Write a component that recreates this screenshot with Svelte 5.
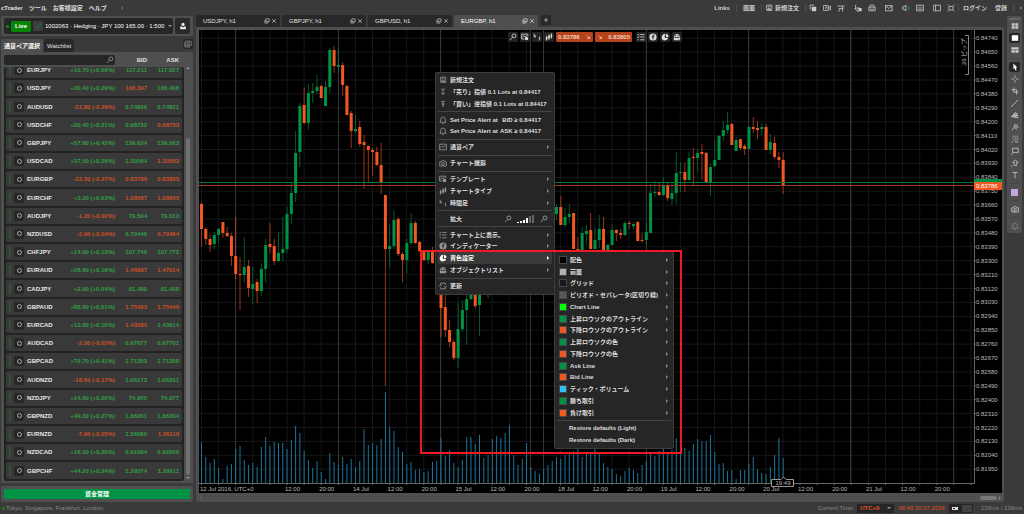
<script lang="ts">
  type Candle = [number, 'u' | 'd', number, number, number, number];

  const icons: Record<string, { d?: string; f?: string }> = {
    order: { d: 'M2 1.5H8.5V6M2 1.5V6.5M3.5 3.5H7M3.5 5.5H7', f: 'M1 6.5H9V8.5H2.5Z' },
    copy: { d: 'M1.5 7V1.5H6.5', f: 'M3.5 3.5H9V9H3.5Z' },
    video: { d: 'M.5 2H6.5V8H.5ZM6.5 5L9.5 2.5V7.5ZM2.5 4.2Q3.5 3 4.5 4.2L3.5 5.4V6.6' },
    pi: { d: 'M.5 2.5H9.5M2 5.5H8M3.5 5.5V7Q3.5 9 1.5 9M7 2.5V9.5' },
    touch: { d: 'M2 1V6.5M.8 5L4 9H6M4 4V7M4 5H7', f: 'M5.5 5H9.5V9H5.5Z' },
    print: { d: 'M2.5 4V1.5H7.5V4M1 4H9V8.5H1ZM2.5 6.5H7.5' },
    mail: { d: 'M.5 2H9V8.5H.5ZM.5 2.5L4.8 5.5L9 2.5' },
    sound: { d: 'M.5 3.5H2.5L5 1.5V8.5L2.5 6.5H.5Z', f: 'M9.5 2.5V7.5L6.5 5Z' },
    keys: { d: 'M.5 1.5H9.5V8.5H.5ZM2 4H3.5M4.3 4H5.7M6.5 4H8M2 6.3H8' },
    side: { d: 'M.5 1.5H9.5V8.5H.5ZM3.2 1.5V8.5' },
    full: { d: 'M2.5 3H7.5V7.5H2.5ZM.5 .8L2 2M9.5 .8L8 2M.5 9.5L2 8M9.5 9.5L8 8' },
    search: { d: 'M6.2 1.2A2.4 2.4 0 1 1 6.2 6A2.4 2.4 0 1 1 6.2 1.2ZM4.3 5.5L1.2 8.8' },
    user: { f: 'M5 1A1.8 1.8 0 0 1 5 5A1.8 1.8 0 0 1 5 1ZM1.5 5.5H3.5L5 7L6.5 5.5H8.5V9H1.5Z' },
    check: { d: 'M1.5 5L4 7.5L8.5 2.5' },
    template: { d: 'M.8 1.5H8.5V4M.8 1.5V7.5H4.5M1.5 5.5L3.5 3.5L5 5L7 3', f: 'M7 4.8A2.2 2.2 0 1 1 7 9.2A2.2 2.2 0 1 1 7 4.8Z' },
    tf: { d: 'M1.5 1V5.5M1.5 3.5H3.2V5.5M7.2 5.8L8.2 5V9.2' },
    candles: { d: 'M2 3.5V9.5M5 1.5V8.5M8 .5V7', f: 'M1 5H3V8H1ZM4 3H6V7H4ZM7 2H9V5.5H7Z' },
    list: { d: 'M.5 2L1.3 3L2.8 1M.5 5L1.3 6L2.8 4M.8 8.5H2.5M4 2H9.5M4 5H9.5M4 8.5H9.5' },
    indicator: { f: 'M5 .5A4.5 4.5 0 1 0 5 9.5A4.5 4.5 0 1 0 5 .5ZM6.8 2V3H5.6V4.2H6.6V5.2H5.6V8.2H4.4V5.2H3.5V4.2H4.4V3Q4.4 2 5.6 2Z' },
    palette: { f: 'M.8 6Q1 2 4.5 1L5.5 2.5Q3.8 4.2 5 5.8H8.6V7.5Q7 9.5 3.5 9.3Q1 9 .8 6ZM6 .8A3.4 3.4 0 0 1 9.2 5H6.4Z' },
    objects: { d: 'M1.5 6Q1.5 1.5 5 1.5Q8 1.5 8 5', f: 'M5 2L7.5 5H2.5ZM1 6H5L9 9H1ZM6 5.5H9V8H7Z' },
    bell: { d: 'M1 7.8H9L7.8 6.3V4Q7.6 1.5 5 1.2Q2.4 1.5 2.2 4V6.3ZM4 9.3H6' },
    sell: { d: 'M2.5 1.5H7.5M5 2V8M3 6L5 8.3L7 6' },
    buy: { d: 'M2.5 2H7.5M5 3V9', f: 'M3 4.5H7L5 7Z' },
    pair: { d: 'M.8 1.5H9.2V8.5H.8ZM2 6L4 4L5.5 5.5L8 3' },
    camera: { d: 'M1 3.5H3L4 2H6.5L7.5 3.5H9.2V8.8H1ZM5.1 4.4A1.7 1.7 0 1 1 5.1 7.8A1.7 1.7 0 1 1 5.1 4.4' },
    refresh: { d: 'M2 3V1.5H8V3.5M8 7V8.5H2V6.5M.5 5L2 3L3.5 5M6.5 5L8 7L9.5 5' },
    window: { d: 'M3 1.5H8.5V6H3ZM1.5 3.5V8.5H6.5V7' },
    close: { d: 'M2 2L8 8M8 2L2 8' },
    plus: { d: 'M5 1.5V8.5M1.5 5H8.5' },
    grid: { f: 'M1 1.5H4.6V4.6H1ZM5.4 1.5H9V4.6H5.4ZM1 5.4H4.6V8.5H1ZM5.4 5.4H9V8.5H5.4Z' },
    single: { f: 'M1 1.5H9V8.5H1Z' },
    split: { f: 'M.5 1.5H9.5V4.3H.5ZM.5 5.2H4.6V8.5H.5ZM5.4 5.2H9.5V8.5H5.4Z' },
    pointer: { f: 'M3 .5L8 5.5H6L7 9L5.6 9.5L4.5 6.5L3 7.5Z' },
    cross: { d: 'M5 .5V3.8M5 6.2V9.5M.5 5H3.8M6.2 5H9.5' },
    crop: { d: 'M3.5 .5V6.5H9.5M.5 3.5H7V9.5' },
    line: { d: 'M1.5 8.5L9 1', f: 'M.5 8H2V9.5H.5Z' },
    fan: { d: 'M1 7L6 1M1 7L8 3M1 7L9 5.5M1 7L9 8.5M4 2.5L6 8M6 2L8.5 8' },
    fork: { d: 'M1 9L5 5L8 2M3 4L7 8M5 1.5L9 5.5M3.5 4.5L5.5 1.5M6 7L9 4.5' },
    fib: { d: 'M2 1.5H3.5M4.5 1.5H6M7 1.5H9M2 4H3.5M4.5 4H6M7 4H9M3 6.5H4.5M5.5 6.5H7M8 6.5H9M5 8.8H9', f: 'M.5 8H2V9.5H.5Z' },
    shape: { d: 'M2 1.5H9V7H2Z', f: 'M.5 8H2V9.5H.5Z' },
    arrow: { d: 'M5.5 1L9 4.5H7V8H4V4.5H2Z', f: 'M.5 8H2V9.5H.5Z' },
    text: { d: 'M1.8 1.8H8.2M5 1.8V9' },
    sheet: { d: 'M2 1.5H9V7H2ZM3.5 3.5H7.5M3.5 5.2H7.5M1 3V8.8H7.5' },
    trend: { d: 'M2.5 2.5L6.5 6.5', f: 'M8 3.5V8H3.5Z' },
  };

  const topGroups = [['copy', 'video', 'pi'], ['touch', 'print'], ['mail'], ['sound', 'keys'], ['side', 'full']];

  const quotes = [
    ['EURJPY', '+10.70 (+0.09%)', '117.011', '117.027', 'uu'],
    ['USDJPY', '+30.40 (+0.29%)', '106.397', '106.408', 'du'],
    ['AUDUSD', '-21.80 (-0.29%)', '0.74806', '0.74821', 'uu'],
    ['USDCHF', '+20.40 (+0.21%)', '0.98732', '0.98753', 'ud'],
    ['GBPJPY', '+57.80 (+0.42%)', '139.634', '139.663', 'uu'],
    ['USDCAD', '+37.50 (+0.29%)', '1.30564', '1.30582', 'ud'],
    ['EURGBP', '-22.30 (-0.27%)', '0.83786', '0.83805', 'dd'],
    ['EURCHF', '+3.20 (+0.03%)', '1.08587', '1.08605', 'dd'],
    ['AUDJPY', '-1.20 (-0.02%)', '79.594', '79.613', 'uu'],
    ['NZDUSD', '-2.90 (-0.04%)', '0.70446', '0.70464', 'ud'],
    ['CHFJPY', '+14.00 (+0.13%)', '107.746', '107.772', 'uu'],
    ['EURAUD', '+28.60 (+0.19%)', '1.46987', '1.47014', 'dd'],
    ['CADJPY', '+2.90 (+0.04%)', '81.480', '81.498', 'uu'],
    ['GBPAUD', '+88.60 (+0.51%)', '1.75403', '1.75446', 'dd'],
    ['EURCAD', '+13.80 (+0.10%)', '1.43585', '1.43614', 'du'],
    ['AUDCAD', '-2.00 (-0.02%)', '0.97677', '0.97701', 'uu'],
    ['GBPCAD', '+70.70 (+0.41%)', '1.71353', '1.71388', 'uu'],
    ['AUDNZD', '-18.60 (-0.17%)', '1.06173', '1.06201', 'uu'],
    ['NZDJPY', '+14.60 (+0.20%)', '74.955', '74.977', 'uu'],
    ['GBPNZD', '+49.30 (+0.27%)', '1.86261', '1.86304', 'uu'],
    ['EURNZD', '-7.90 (-0.05%)', '1.56080', '1.56110', 'ud'],
    ['NZDCAD', '+18.30 (+0.20%)', '0.91984', '0.92006', 'uu'],
    ['GBPCHF', '+44.20 (+0.34%)', '1.29574', '1.29611', 'uu'],
  ];

  const chartTabs = ['USDJPY, h1', 'GBPJPY, h1', 'GBPUSD, h1', 'EURGBP, h1'];

  // slot, direction, high, body top, body bottom, low
  const candles: Candle[] = [
    [0, 'd', 172, 174, 199, 217], [1, 'd', 197, 199, 209, 215], [2, 'd', 205, 209, 215, 222], [3, 'u', 202, 205, 214, 219],
    [4, 'u', 198, 199, 205, 213], [5, 'd', 192, 192, 203, 208], [6, 'd', 197, 203, 206, 207], [7, 'd', 203, 206, 226, 236],
    [8, 'd', 187, 226, 244, 249], [9, 'd', 227, 244, 245, 280], [10, 'u', 207, 237, 245, 253], [11, 'd', 230, 236, 258, 267],
    [12, 'u', 237, 254, 259, 274], [13, 'd', 249, 252, 261, 273], [14, 'u', 233, 239, 261, 266], [15, 'u', 209, 215, 239, 253],
    [16, 'd', 193, 214, 217, 223], [17, 'd', 209, 216, 231, 235], [18, 'u', 202, 223, 231, 232], [19, 'u', 187, 219, 223, 231],
    [20, 'u', 177, 184, 219, 223], [21, 'u', 153, 163, 184, 194], [22, 'u', 101, 123, 163, 172], [23, 'u', 73, 76, 122, 137],
    [24, 'd', 58, 75, 93, 94], [25, 'u', 54, 63, 93, 100], [26, 'u', 53, 61, 63, 73], [27, 'u', 45, 57, 61, 64],
    [28, 'd', 55, 56, 68, 68], [29, 'u', 51, 57, 76, 76], [30, 'u', 18, 20, 57, 63], [31, 'd', 16, 20, 36, 43],
    [32, 'u', 19, 35, 37, 43], [33, 'd', 32, 35, 55, 66], [34, 'd', 55, 56, 85, 85], [35, 'd', 81, 83, 101, 118],
    [36, 'u', 85, 99, 101, 103], [37, 'd', 91, 97, 114, 117], [38, 'd', 105, 112, 115, 159], [39, 'd', 115, 116, 120, 152],
    [40, 'd', 118, 120, 122, 146], [41, 'd', 117, 122, 135, 136], [42, 'd', 113, 135, 153, 164], [43, 'd', 165, 165, 219, 356],
    [44, 'u', 194, 216, 219, 237], [45, 'u', 180, 190, 216, 219], [46, 'd', 187, 189, 224, 226], [47, 'd', 222, 224, 230, 252],
    [48, 'u', 209, 213, 230, 243], [49, 'u', 183, 193, 213, 215], [50, 'd', 191, 193, 213, 214], [51, 'd', 211, 212, 221, 222],
    [52, 'd', 221, 222, 230, 231], [53, 'u', 220, 222, 230, 234], [54, 'd', 217, 221, 233, 234], [56, 'd', 225, 230, 278, 307],
    [57, 'd', 260, 277, 300, 307], [58, 'd', 290, 300, 312, 317], [59, 'd', 310, 312, 328, 330], [60, 'u', 273, 299, 328, 338],
    [61, 'u', 270, 280, 299, 302], [62, 'u', 260, 269, 280, 315], [63, 'u', 255, 262, 269, 270], [64, 'd', 238, 240, 276, 278],
    [65, 'u', 240, 245, 275, 306], [67, 'd', 240, 242, 250, 268],
    [83, 'u', 174, 177, 184, 190], [84, 'd', 166, 177, 195, 195], [85, 'u', 178, 187, 195, 197], [86, 'u', 174, 184, 187, 193],
    [87, 'd', 183, 183, 219, 219], [88, 'd', 207, 219, 221, 221], [89, 'u', 197, 203, 221, 221], [90, 'u', 195, 201, 204, 215],
    [91, 'd', 183, 200, 219, 219], [92, 'u', 198, 210, 219, 219], [93, 'u', 185, 199, 210, 218], [94, 'd', 187, 199, 221, 221],
    [95, 'u', 214, 215, 220, 220], [96, 'u', 194, 200, 215, 215], [97, 'd', 199, 200, 203, 211], [98, 'd', 199, 203, 205, 209],
    [99, 'u', 191, 193, 205, 206], [100, 'd', 191, 193, 194, 199], [101, 'u', 192, 194, 196, 199], [102, 'd', 191, 192, 211, 211],
    [103, 'd', 203, 210, 211, 213], [104, 'u', 193, 202, 210, 215], [105, 'u', 154, 163, 203, 203], [106, 'u', 151, 162, 163, 167],
    [107, 'd', 152, 162, 165, 166], [108, 'u', 147, 156, 165, 166], [109, 'd', 153, 155, 168, 171], [110, 'u', 152, 163, 169, 175],
    [111, 'u', 122, 143, 163, 174], [112, 'u', 132, 142, 143, 162], [113, 'd', 133, 142, 150, 162], [114, 'u', 122, 128, 150, 151],
    [115, 'd', 118, 127, 128, 156], [116, 'u', 119, 123, 128, 142], [117, 'd', 114, 122, 124, 150], [118, 'd', 122, 123, 152, 152],
    [119, 'u', 134, 137, 152, 166], [120, 'u', 110, 130, 136, 137], [121, 'u', 105, 106, 130, 130], [122, 'u', 91, 100, 106, 111],
    [123, 'u', 82, 95, 100, 104], [124, 'd', 93, 94, 115, 115], [125, 'u', 107, 110, 121, 121], [126, 'd', 109, 109, 118, 120],
    [127, 'd', 114, 116, 119, 125], [128, 'u', 96, 97, 119, 119], [129, 'd', 87, 97, 99, 103], [130, 'd', 91, 98, 100, 109],
    [131, 'u', 93, 97, 99, 105], [132, 'd', 94, 97, 120, 120], [133, 'u', 104, 112, 120, 124], [134, 'd', 107, 113, 127, 129],
    [135, 'd', 122, 127, 130, 138], [136, 'd', 122, 130, 156, 164],
  ];

  const volumes = [
    41, 26, 20, 24, 15, 4, 17, 19, 34, 37, 23, 18, 20, 16, 36, 46, 37, 41, 40, 40, 34, 43, 57, 50, 32, 23, 15, 22, 11, 4,
    30, 21, 18, 26, 19, 24, 16, 22, 54, 38, 40, 38, 44, 91, 56, 52, 36, 31, 19, 21, 13, 14, 11, 12, 21, 22, 45, 27, 33, 20,
    16, 23, 46, 46, 39, 48, 25, 28, 44, 47, 45, 50, 58, 28, 18, 24, 40, 16, 12, 9, 14, 18, 22, 26, 24, 28, 30, 32, 34, 26,
    31, 30, 34, 29, 20, 16, 14, 9, 7, 12, 15, 13, 10, 18, 22, 30, 27, 32, 34, 30, 33, 45, 30, 35, 32, 39, 44, 42, 42, 48,
    31, 19, 20, 12, 13, 4, 13, 13, 19, 26, 14, 10, 9, 16, 28, 45, 25,
  ];

  const slotX = (i: number) => 2.5 + i * 4.277;
  const columns = Array.from({ length: 46 }, (_, i) => 2.5 + i * 17.1);
  const days = [36, 139, 241, 331, 344, 447, 549, 651, 754];
  const prices = Array.from({ length: 32 }, (_, i) => ({
    y: 8.3 + i * 13.9,
    label: (0.8474 - i * 0.0009).toFixed(5),
  }));
  const times = ['12:00', '20:00', '14 Jul', '12:00', '20:00', '15 Jul', '12:00', '20:00', '18 Jul', '12:00', '20:00',
    '19 Jul', '12:00', '20:00', '20 Jul', '12:00', '20:00', '21 Jul', '12:00', '20:00'];

  const menu = [
    [{ icon: 'order', label: '新規注文' }, { icon: 'sell', label: '「売り」指値 0.1 Lots at 0.84417' }, { icon: 'buy', label: '「買い」逆指値 0.1 Lots at 0.84417' }],
    [{ icon: 'bell', label: 'Set Price Alert at', value: 'BID ≥ 0.84417' }, { icon: 'bell', label: 'Set Price Alert at', value: 'ASK ≥ 0.84417' }],
    [{ icon: 'pair', label: '通貨ペア', sub: true }],
    [{ icon: 'camera', label: 'チャート撮影' }],
    [{ icon: 'template', label: 'テンプレート', sub: true }, { icon: 'candles', label: 'チャートタイプ', sub: true }, { icon: 'tf', label: '時間足', sub: true }],
    [{ icon: '', label: '拡大', zoom: true }],
    [{ icon: 'list', label: 'チャート上に表示。', sub: true }, { icon: 'indicator', label: 'インディケーター', sub: true }, { icon: 'palette', label: '背色設定', sub: true, active: true }, { icon: 'objects', label: 'オブジェクトリスト', sub: true }],
    [{ icon: 'refresh', label: '更新' }],
  ] as { icon: string; label: string; value?: string; sub?: boolean; zoom?: boolean; active?: boolean }[][];

  const colors = [
    ['#000000', '配色'], ['#b2b2b2', '前面'], ['#18181f', 'グリッド'], ['#595959', 'ピリオド・セパレータ(区切り線)'],
    ['#00ff00', 'Chart Line'], ['#009345', '上昇ロウソクのアウトライン'], ['#f15923', '下降ロウソクのアウトライン'],
    ['#009345', '上昇ロウソクの色'], ['#f15923', '下降ロウソクの色'], ['#009345', 'Ask Line'], ['#f15923', 'Bid Line'],
    ['#33bdf2', 'ティック・ボリューム'], ['#009345', '勝ち取引'], ['#f15923', '負け取引'],
  ];

  const rail = [
    ['grid', 'single', 'split'],
    ['pointer', 'cross', 'crop', 'line', 'fan', 'fork', 'fib', 'shape', 'arrow', 'text'],
    ['swatch'],
    ['camera'],
    ['bell'],
  ];

  let selectedTab = $state('EURGBP, h1');
</script>

{#snippet icon(name: string)}
  <svg class="icon" viewBox="0 0 10 10" aria-hidden="true">
    {#if icons[name]?.d}<path d={icons[name].d} fill="none" stroke="currentColor" />{/if}
    {#if icons[name]?.f}<path class="solid" d={icons[name].f} fill="currentColor" fill-rule="evenodd" />{/if}
  </svg>
{/snippet}

<div class="app">
  <header>
    <nav>
      <button>cTrader</button>
      <button>ツール</button>
      <button>お客様設定</button>
      <button>ヘルプ</button>
      <span class="chev left"></span>
    </nav>
    <div class="top-right">
      <button>Links</button>
      <i class="sep"></i>
      <button>画面</button>
      <i class="sep"></i>
      <button class="new-order">{@render icon('order')}新規注文</button>
      <i class="sep"></i>
      <div class="icon-groups">
        {#each topGroups as group}
          <div class="icon-group">
            {#each group as name}
              <button class={name} aria-label={name}>{@render icon(name)}</button>
            {/each}
          </div>
        {/each}
      </div>
      <div class="account-links">
        <i class="sep"></i>
        <button>ログイン</button>
        <button class="register">登録</button>
      </div>
      <i class="sep"></i>
      <span class="chev"></span>
    </div>
  </header>

  <main>
    <aside>
      <section class="account">
        <div class="account-box">
          <i class="dot"></i>
          <button class="live">Live</button>
          <span class="tick">{@render icon('check')}</span>
          <select aria-label="Account">
            <option>1002063 · Hedging · JPY 100 165.00 · 1:500</option>
          </select>
          <span class="chev down"></span>
        </div>
        <button class="profile" aria-label="Profile">{@render icon('user')}</button>
      </section>

      <div class="side-tabs">
        <button class="on">通貨ペア選択</button>
        <button>Watchlist</button>
        <button class="sheet" aria-label="Details">{@render icon('sheet')}</button>
      </div>

      <section class="pairs">
        <div class="filter">
          <label class="search"><input type="text" aria-label="Search" />{@render icon('search')}</label>
          <b>BID</b>
          <b>ASK</b>
        </div>
        <div class="scroller">
          <div class="list">
            <table aria-label="Quotes">
              <tbody>
                {#each quotes as [symbol, change, bid, ask, dir]}
                  <tr>
                    <td class="mark"><i></i></td>
                    <td class="opt"><button aria-label="Open {symbol}"><span></span></button></td>
                    <th scope="row">{symbol}</th>
                    <td class="change {change[0] === '+' ? 'u' : 'd'}">{change}</td>
                    <td class="price {dir[0]}">{bid}</td>
                    <td class="price {dir[1]}">{ask}</td>
                  </tr>
                {/each}
              </tbody>
            </table>
          </div>
          <div class="bar"><span class="chev up"></span><i></i><span class="chev down"></span></div>
        </div>
      </section>

      <section class="funds"><button>資金管理</button></section>
    </aside>

    <div class="center">
      <div class="chart-tabs">
        {#each chartTabs as tab}
          <div class="chart-tab" class:on={selectedTab === tab}>
            <button class="name" onclick={() => (selectedTab = tab)}>{tab}</button>
            <button aria-label="Detach">{@render icon('window')}</button>
            <button aria-label="Close">{@render icon('close')}</button>
          </div>
        {/each}
        <button class="add" aria-label="Add chart">{@render icon('plus')}</button>
      </div>

      <div class="frame">
        <div class="plot">
          <svg class="chart" viewBox="0 0 803 463">
            <rect width="803" height="463" fill="#000" />
            {#each prices as p}
              <line class="grid" x1="0" x2="775" y1={p.y} y2={p.y} />
            {/each}
            {#each columns as x}
              <line class="grid" x1={x} x2={x} y1="0" y2="453" />
              <line class="axis" x1={x} x2={x} y1="453" y2="455" />
            {/each}
            {#each days as x}
              <line class="day" x1={x + 0.5} x2={x + 0.5} y1="0" y2="453" />
            {/each}
            {#each volumes as v, i}
              <rect x={slotX(i) - 0.5} y={453 - v} width="1" height={v} fill="#1e7397" />
            {/each}
            {#each candles as [i, dir, high, top, bottom, low]}
              <g class={dir === 'u' ? 'bull' : 'bear'}>
                <rect x={slotX(i) - 0.5} y={high} width="1" height={low - high} opacity="0.6" />
                <rect x={slotX(i) - 1.5} y={top} width="3" height={Math.max(bottom - top, 1)} />
              </g>
            {/each}
            <line x1="0" x2="775" y1="152.5" y2="152.5" stroke="#007a38" />
            <line x1="0" x2="775" y1="155.5" y2="155.5" stroke="#9c3c1b" />

            <line class="axis" x1="0" x2="775" y1="453.5" y2="453.5" />
            <line class="axis" x1="775.5" x2="775.5" y1="0" y2="454" />
            {#each prices as p}
              <line class="axis" x1="775" x2="777" y1={p.y} y2={p.y} />
              <text x="777" y={p.y + 2}>{p.label}</text>
            {/each}
            <rect x="775" y="149" width="28" height="5" fill="#009345" />
            <rect x="775" y="152" width="28" height="8" fill="#f15923" />
            <text class="bid" x="777" y="158">0.83786</text>

            <text x="1" y="461">12 Jul 2016, UTC+0</text>
            {#each times as t, i}
              <text x={93.5 + i * 34.2} y="461" text-anchor="middle">{t}</text>
            {/each}
            <path d="M572.5 449.5H582L584.5 447L587 449.5H594.5V456.5H572.5Z" fill="#000" stroke="#999" />
            <text x="584" y="455" text-anchor="middle">19:49</text>

            <path d="M766 5.5H769.5V44.5H766" fill="none" stroke="#888" />
            <text x="767" y="35" transform="rotate(-90 767 35)">26 ピップ</text>
          </svg>

          <div class="chart-tools">
            <button aria-label="Zoom">{@render icon('search')}</button>
            <button aria-label="Template">{@render icon('template')}</button>
            <button aria-label="Timeframe">{@render icon('tf')}</button>
            <button aria-label="Chart type">{@render icon('candles')}</button>
            <button class="deal">0.83786{@render icon('trend')}</button>
            <button class="deal">{@render icon('trend')}0.83805</button>
            <button aria-label="View options">{@render icon('list')}</button>
            <button aria-label="Indicators">{@render icon('indicator')}</button>
            <button aria-label="Colors">{@render icon('palette')}</button>
            <button aria-label="Objects">{@render icon('objects')}</button>
          </div>

          <div class="menu context" role="menu">
            {#each menu as group, g}
              {#if g > 0}<hr />{/if}
              {#each group as item}
                <button role="menuitem" class:active={item.active}>
                  <span class="ico">{#if item.icon}{@render icon(item.icon)}{/if}</span>
                  <span class="label">{item.label}</span>
                  {#if item.value}<span class="value">{item.value}</span>{/if}
                  {#if item.zoom}
                    <span class="zoom">
                      {@render icon('search')}
                      <svg class="levels" viewBox="0 0 18 8">
                        {#each [1, 2, 3, 5, 7, 8] as h, i}
                          <rect x={i * 3} y={8 - h} width="2" height={h} fill={i < 4 ? '#fff' : '#666'} />
                        {/each}
                      </svg>
                      {@render icon('search')}
                    </span>
                  {/if}
                  {#if item.sub}<span class="chev"></span>{/if}
                </button>
              {/each}
            {/each}
          </div>

          <div class="menu colors" role="menu">
            {#each colors as [color, label]}
              <button role="menuitem">
                <i class="swatch" style="background: {color}"></i>
                <span class="label">{label}</span>
                <span class="chev"></span>
              </button>
            {/each}
            <hr />
            <button role="menuitem" class="plain">Restore defaults (Light)</button>
            <button role="menuitem" class="plain">Restore defaults (Dark)</button>
          </div>

          <div class="highlight"></div>
        </div>
        <div class="hscroll"><span class="chev left"></span><i></i><span class="chev"></span></div>
      </div>
    </div>

    <div class="rail">
      <i class="handle"></i>
      {#each rail as group}
        <div class="rail-group">
          {#each group as name}
            <button class:on={name === 'single' || name === 'pointer'} class:dim={name === 'bell'} aria-label={name}>
              {#if name === 'swatch'}<i class="lilac"></i>{:else}{@render icon(name)}{/if}
            </button>
          {/each}
        </div>
      {/each}
    </div>
  </main>

  <footer>
    <i class="dot"></i>
    <span class="sessions">Tokyo, Singapore, Frankfurt, London</span>
    <label for="tz">Current Time:</label>
    <span class="tz">
      <select id="tz"><option>UTC+0</option></select>
      <span class="chev down"></span>
    </span>
    <span class="clock">08:40 20.07.2016</span>
    <button class="link-state" aria-label="Connection"><b></b><i></i></button>
    <span>136ms / 136ms</span>
  </footer>
</div>

<style>
  :global(body) {
    margin: 0;
    background: #3a3a3a;
  }
  .app {
    display: flex;
    flex-direction: column;
    min-height: 100vh;
    background: #3a3a3a;
    color: #e0e0e0;
    font: 6px/8px "Liberation Sans", "Noto Sans CJK JP", sans-serif;
    white-space: nowrap;
    overflow: hidden;
  }
  .app * {
    box-sizing: border-box;
  }
  button, select, input {
    margin: 0;
    padding: 0;
    border: 0;
    background: none;
    color: inherit;
    font: inherit;
    appearance: none;
  }
  button {
    display: flex;
    align-items: center;
  }
  .icon {
    display: block;
    flex: none;
    width: 8px;
    height: 8px;
  }
  .chev {
    flex: none;
    width: 0;
    height: 0;
    border: 2px solid transparent;
    border-left: 2px solid #8a8a8a;
    border-right: 0;
  }
  .chev.left {
    border-left: 0;
    border-right: 2px solid #666;
  }
  .chev.down {
    border: 2px solid transparent;
    border-top-color: #999;
    border-bottom: 0;
  }
  .chev.up {
    border: 2px solid transparent;
    border-bottom-color: #999;
    border-top: 0;
  }
  .sep {
    width: 1px;
    height: 8px;
    background: #4c4c4c;
  }
  .dot {
    flex: none;
    width: 3px;
    height: 3px;
    border-radius: 50%;
    background: #0c8a12;
  }

  header {
    display: flex;
    justify-content: space-between;
    height: 15px;
    font-weight: bold;
  }
  nav {
    display: flex;
    align-items: center;
    gap: 6px;
    padding-left: 1px;
  }
  nav .chev {
    margin-left: 8px;
  }
  .top-right {
    display: flex;
    align-items: center;
    gap: 6px;
    padding-right: 2px;
    color: #ccc;
  }
  .new-order {
    gap: 2px;
    margin-left: -3px;
  }
  .icon-groups {
    display: flex;
    gap: 9px;
    margin-left: -3px;
  }
  .icon-group {
    display: flex;
    gap: 6px;
  }
  .sound .solid {
    fill: #1d8a45;
  }
  .account-links {
    display: flex;
    gap: 4px;
    margin-left: -3px;
  }
  .register {
    margin-left: 4px;
  }

  main {
    display: grid;
    grid-template-columns: 192px 1fr 15px;
    gap: 3px;
    flex: 1;
    padding: 0 2px 0 1px;
  }
  aside {
    display: flex;
    flex-direction: column;
    padding-top: 1px;
  }
  .account {
    display: flex;
    gap: 2px;
    height: 20px;
    padding: 2px 3px;
    background: #4f4f4f;
    border-radius: 2px;
  }
  .account-box {
    display: flex;
    flex: 1;
    align-items: center;
    gap: 2px;
    min-width: 0;
    padding: 0 1px 0 2px;
    background: #262626;
    border-radius: 2px;
  }
  .account-box .chev {
    margin-left: -2px;
  }
  .live {
    flex: none;
    justify-content: center;
    width: 20px;
    height: 11px;
    border-radius: 1px;
    background: #068406;
    color: #fff;
    font-weight: bold;
  }
  .tick {
    display: grid;
    flex: none;
    place-items: center;
    width: 10px;
    height: 10px;
    background: #3d3d3d;
    color: #0d9449;
  }
  .account-box select {
    flex: 1;
    min-width: 0;
    height: 12px;
    color: #fff;
  }
  .profile {
    flex: none;
    justify-content: center;
    width: 15px;
    background: #2a2a2a;
    border-radius: 2px;
    color: #eee;
  }
  .side-tabs {
    display: flex;
    gap: 1px;
    height: 13px;
    margin-top: 3px;
  }
  .side-tabs button {
    padding: 0 3px;
    border-radius: 2px 2px 0 0;
    background: #282828;
  }
  .side-tabs .on {
    background: #4f4f4f;
    color: #fff;
    font-weight: bold;
  }
  .side-tabs .sheet {
    height: 10px;
    margin-left: auto;
    padding: 0 1px;
    border-radius: 1px;
    color: #888;
  }
  .pairs {
    display: flex;
    flex: 1;
    flex-direction: column;
    padding: 0 1px 2px 3px;
    background: #4f4f4f;
  }
  .filter {
    display: grid;
    grid-template-columns: 111px 32px 32px;
    align-items: center;
    height: 15px;
    text-align: right;
  }
  .search {
    display: flex;
    align-items: center;
    height: 10px;
    padding-right: 1px;
    background: #262626;
    border-radius: 2px;
    color: #999;
  }
  .search input {
    flex: 1;
    min-width: 0;
    outline: none;
  }
  .scroller {
    display: flex;
    flex: 1;
  }
  .list {
    width: 180px;
    padding: 0 2px;
    overflow: hidden;
    background: #232323;
    border-radius: 2px;
  }
  table {
    width: 176px;
    height: 421px;
    margin-top: -7px;
    table-layout: fixed;
    border-collapse: separate;
    border-spacing: 0 2px;
  }
  td, th {
    padding: 0;
    background: #393939;
    font-weight: bold;
    text-align: right;
  }
  .mark {
    width: 8px;
    border-radius: 2px 0 0 2px;
  }
  .mark i {
    display: block;
    width: 2px;
    height: 11px;
    margin-left: 3px;
    background: #2d5530;
  }
  .opt {
    width: 12px;
  }
  .opt button {
    justify-content: center;
    width: 10px;
    height: 10px;
    border-radius: 2px;
    background: #272727;
  }
  .opt span {
    width: 5px;
    height: 5px;
    border: 1px solid #aaa;
    border-radius: 50%;
  }
  th {
    width: 31px;
    padding-left: 1px;
    color: #e8e8e8;
    text-align: left;
  }
  .change {
    width: 58px;
  }
  .price {
    width: 32px;
  }
  .price:last-child {
    width: 35px;
    padding-right: 3px;
    border-radius: 0 2px 2px 0;
  }
  .u {
    color: #339d46;
  }
  .d {
    color: #cc5028;
  }
  .bar {
    display: flex;
    flex: 1;
    flex-direction: column;
    align-items: center;
    gap: 2px;
    padding-bottom: 2px;
  }
  .bar i {
    width: 4px;
    height: 337px;
    margin-top: auto;
    background: #707070;
    border-radius: 2px;
  }
  .funds {
    height: 16px;
    margin-top: 3px;
    padding: 3px;
    background: #4f4f4f;
    border-radius: 2px;
  }
  .funds button {
    justify-content: center;
    width: 100%;
    height: 10px;
    border-radius: 1px;
    background: #009245;
    color: #fff;
    font-weight: bold;
  }

  .center {
    min-width: 0;
  }
  .chart-tabs {
    display: flex;
    gap: 2px;
    height: 12px;
  }
  .chart-tab {
    display: flex;
    align-items: center;
    width: 84px;
    padding: 0 2px 0 7px;
    background: #282828;
    border-radius: 2px 2px 0 0;
  }
  .chart-tab.on {
    background: #4f4f4f;
    color: #fff;
  }
  .chart-tab .name {
    flex: 1;
  }
  .chart-tab .icon, .add .icon {
    width: 6px;
    height: 6px;
  }
  .chart-tab .icon {
    margin-right: 1px;
  }
  .add {
    justify-content: center;
    width: 10px;
    height: 10px;
    margin-left: 1px;
    border-radius: 2px;
    background: #282828;
  }
  .frame {
    padding: 3px 2px 0 3px;
    background: #4f4f4f;
    border-radius: 0 2px 2px 2px;
  }
  .plot {
    position: relative;
  }
  .chart {
    display: block;
    width: 100%;
  }
  .chart text {
    fill: #bbb;
    font-size: 6px;
  }
  .chart .bid {
    fill: #fff;
  }
  .grid {
    stroke: #17171a;
  }
  .day {
    stroke: #353535;
  }
  .axis {
    stroke: #666;
  }
  .bull {
    fill: #009345;
  }
  .bear {
    fill: #f15923;
  }
  .hscroll {
    display: flex;
    align-items: center;
    justify-content: space-between;
    height: 9px;
    padding: 0 1px;
  }
  .hscroll i {
    width: 17px;
    height: 4px;
    margin: 0 2px 0 auto;
    border-radius: 2px;
    background: #777;
  }

  .chart-tools {
    position: absolute;
    top: 2px;
    left: 309px;
    display: flex;
    gap: 2px;
  }
  .chart-tools button {
    justify-content: center;
    width: 10px;
    height: 10px;
    border-radius: 1px;
    background: #222;
    color: #ddd;
  }
  .chart-tools .deal {
    justify-content: space-between;
    width: 37px;
    padding: 0 2px;
    background: #b5431b;
    color: #f3cfc0;
    font-weight: bold;
  }
  .deal .icon {
    width: 6px;
    height: 6px;
  }
  .chart-tools .deal + button:not(.deal) {
    margin-left: 2px;
  }

  .menu {
    position: absolute;
    display: flex;
    flex-direction: column;
    width: 120px;
    border: 1px solid #3c3c3c;
    border-radius: 2px;
    background: #262626;
    color: #dedede;
    font-weight: bold;
  }
  .context {
    top: 42px;
    left: 236px;
    height: 223px;
    padding: 1px 2px 2px;
  }
  .colors {
    top: 221px;
    left: 355px;
    height: 198px;
    padding: 2px;
  }
  .menu button {
    flex: 1;
    min-height: 0;
    padding-right: 3px;
    text-align: left;
  }
  .menu .active {
    background: #3a3a3a;
    border-radius: 2px;
    color: #fff;
  }
  .menu hr {
    width: 100%;
    height: 4px;
    margin: 0;
    border: 0;
    background: linear-gradient(#444, #444) center / 100% 1px no-repeat;
  }
  .ico {
    width: 10px;
    margin: 0 1px;
    color: #9a9a9a;
  }
  .active .ico {
    color: #fff;
  }
  .menu .chev {
    margin-left: auto;
  }
  .menu .active .chev {
    border-left-color: #fff;
  }
  .value {
    margin: 0 8px 0 auto;
  }
  .zoom {
    display: flex;
    align-items: center;
    gap: 5px;
    margin: 0 1px 0 auto;
    color: #aaa;
  }
  .levels {
    flex: none;
    width: 18px;
    height: 8px;
  }
  .swatch {
    width: 8px;
    height: 8px;
    margin: 0 3px 0 2px;
    border: 1px solid #484848;
  }
  .menu .plain {
    padding-left: 12px;
  }
  .highlight {
    position: absolute;
    top: 220px;
    left: 221px;
    width: 262px;
    height: 204px;
    border: 2px solid #ed1c24;
    pointer-events: none;
  }

  .rail {
    display: flex;
    flex-direction: column;
    align-items: center;
    align-self: start;
    margin-top: 1px;
    padding-bottom: 2px;
    border-radius: 2px;
    background: #4f4f4f;
    color: #ccc;
  }
  .handle {
    width: 11px;
    height: 2px;
    margin: 2px 0 1px;
    background: #666;
  }
  .rail-group {
    display: flex;
    flex-direction: column;
    gap: 2px;
  }
  .rail-group + .rail-group {
    margin-top: 3px;
    padding-top: 3px;
    border-top: 1px solid #454545;
  }
  .rail button {
    justify-content: center;
    width: 11px;
    height: 10px;
    border-radius: 2px;
  }
  .rail .on {
    background: #262626;
    color: #fff;
  }
  .rail .dim {
    color: #888;
  }
  .lilac {
    width: 7px;
    height: 7px;
    background: #c3a6dc;
  }

  footer {
    display: flex;
    align-items: center;
    height: 12px;
    padding: 0 2px;
    color: #888;
  }
  .sessions {
    margin: 0 auto 0 1px;
  }
  .tz {
    display: flex;
    align-items: center;
    width: 37px;
    height: 9px;
    margin: 0 4px 0 3px;
    padding: 0 3px;
    background: #262626;
  }
  .tz select {
    flex: 1;
    min-width: 0;
    color: #e0531f;
    font-weight: bold;
  }
  .clock {
    color: #e0531f;
  }
  .link-state {
    justify-content: space-between;
    width: 24px;
    height: 9px;
    margin: 0 8px 0 4px;
    padding: 0 1px;
    background: #262626;
    border-radius: 1px;
  }
  .link-state b {
    width: 6px;
    height: 3px;
    margin-left: 2px;
    border: 1px solid #ddd;
    border-width: 1px 3px 1px 1px;
  }
  .link-state i {
    width: 10px;
    height: 7px;
    background: #424242;
  }
</style>
